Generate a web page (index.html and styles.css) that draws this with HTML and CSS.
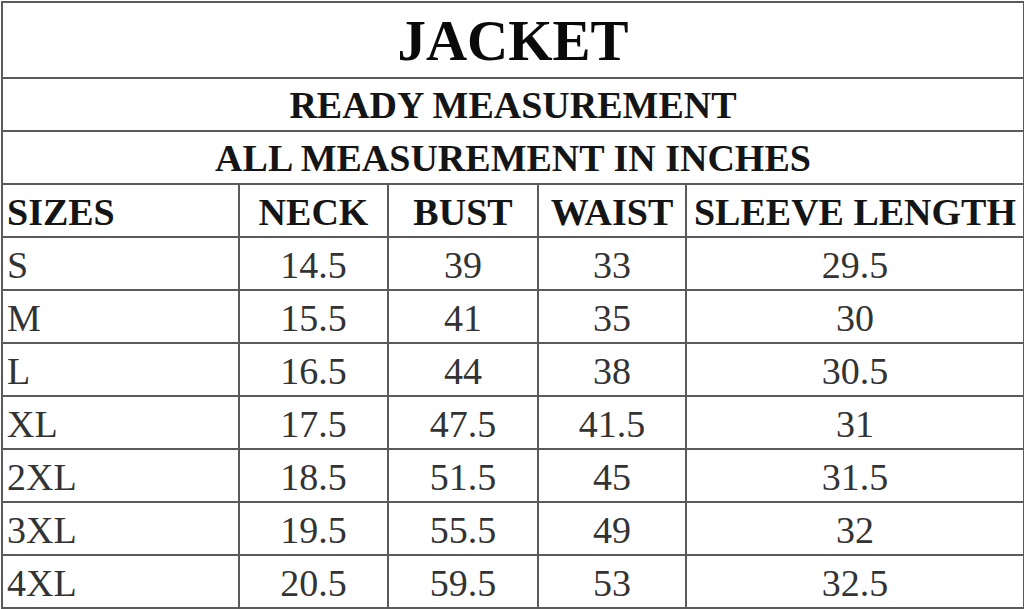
FILE: index.html
```html
<!DOCTYPE html>
<html>
<head>
<meta charset="utf-8">
<link rel="stylesheet" href="styles.css">
</head>
<body>
<table class="chart">
  <colgroup>
    <col class="c1"><col class="c2"><col class="c3"><col class="c4"><col class="c5">
  </colgroup>
  <tr class="title-row"><th colspan="5" class="title">JACKET</th></tr>
  <tr class="sub-row"><th colspan="5" class="sub">READY MEASUREMENT</th></tr>
  <tr class="sub-row"><th colspan="5" class="sub">ALL MEASUREMENT IN INCHES</th></tr>
  <tr class="row head">
    <th class="first">SIZES</th><th>NECK</th><th>BUST</th><th>WAIST</th><th>SLEEVE LENGTH</th>
  </tr>
  <tr class="row"><td class="first">S</td><td>14.5</td><td>39</td><td>33</td><td>29.5</td></tr>
  <tr class="row"><td class="first">M</td><td>15.5</td><td>41</td><td>35</td><td>30</td></tr>
  <tr class="row"><td class="first">L</td><td>16.5</td><td>44</td><td>38</td><td>30.5</td></tr>
  <tr class="row"><td class="first">XL</td><td>17.5</td><td>47.5</td><td>41.5</td><td>31</td></tr>
  <tr class="row"><td class="first">2XL</td><td>18.5</td><td>51.5</td><td>45</td><td>31.5</td></tr>
  <tr class="row"><td class="first">3XL</td><td>19.5</td><td>55.5</td><td>49</td><td>32</td></tr>
  <tr class="row"><td class="first">4XL</td><td>20.5</td><td>59.5</td><td>53</td><td>32.5</td></tr>
</table>
</body>
</html>
```
FILE: styles.css
```css
html, body {
  margin: 0;
  padding: 0;
  background: #ffffff;
}
body, .chart, .chart th, .chart td {
  font-family: "Liberation Serif", "Times New Roman", Times, "DejaVu Serif", serif;
}
.chart {
  border-collapse: collapse;
  table-layout: fixed;
  width: 1022px;
  margin: 1px 0 0 1px;
}
.c1 { width: 237px; }
.c2 { width: 149px; }
.c3 { width: 150px; }
.c4 { width: 148px; }
.c5 { width: 338px; }
.chart th, .chart td {
  border: 2px solid #5a5a5a;
  padding: 0;
  text-align: center;
  vertical-align: middle;
  white-space: nowrap;
  overflow: hidden;
}
.title-row { height: 76px; }
.sub-row, .row { height: 53px; }
.title {
  font-size: 57px;
  font-weight: bold;
  color: #0a0a0a;
  padding-top: 6px;
}
.sub {
  font-size: 38px;
  font-weight: bold;
  color: #151515;
  padding-top: 4px;
}
.head th {
  font-size: 38px;
  font-weight: bold;
  color: #151515;
  padding-top: 2px;
}
.chart td {
  font-size: 38px;
  font-weight: normal;
  color: #333333;
  padding-top: 2px;
}
.chart .first {
  text-align: left;
  padding-left: 4px;
}
```
